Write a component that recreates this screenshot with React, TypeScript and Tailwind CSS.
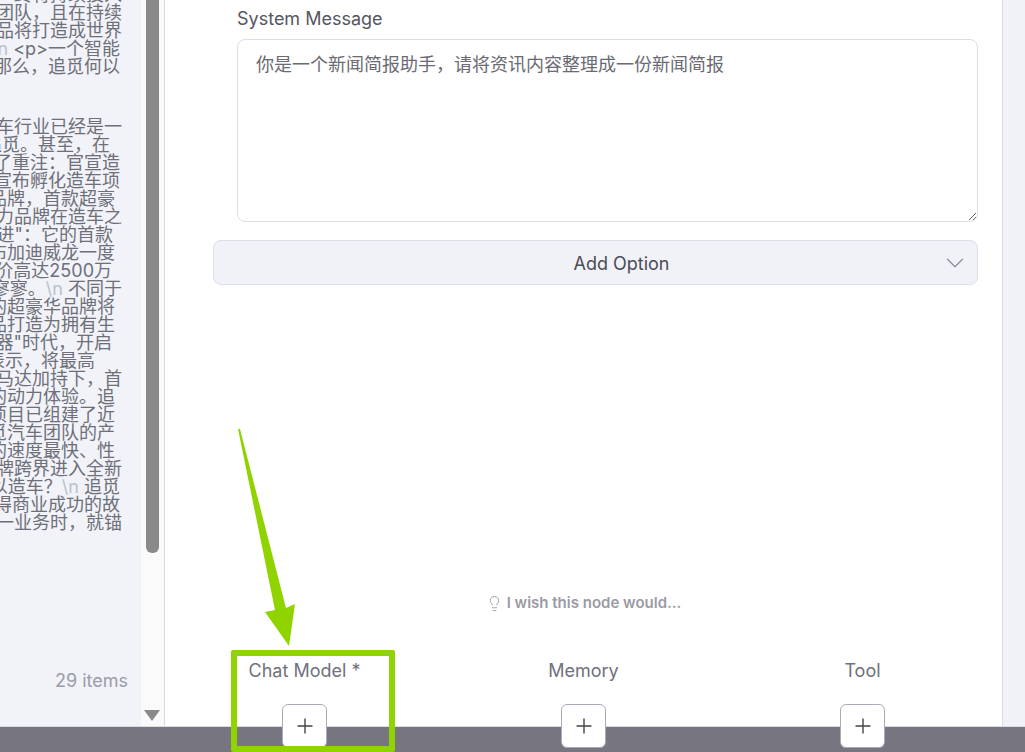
import { ChevronDown, Lightbulb, Plus } from "lucide-react";

const Esc = ({ t }: { t: string }) => <span className="text-[#b9c2cd]">{t}</span>;

const firstBlock = [
  { k: 0, pr: "pr-[19px]", c: <>终将持续投入</> },
  { k: 1, pr: "pr-[19px]", c: <>团队，且在持续</> },
  { k: 2, pr: "pr-[19px]", c: <>品将打造成世界</> },
  { k: 3, pr: "pr-[21px]", c: <><Esc t="n" /> &lt;p&gt;一个智能</> },
  { k: 4, pr: "pr-[21px]", c: <>那么，追觅何以</> },
];

const secondBlock = [
  { k: 0, pr: "pr-[19px]", c: <>车行业已经是一</> },
  { k: 1, pr: "pr-[31px]", c: <>追觅。甚至，在</> },
  { k: 2, pr: "pr-[21px]", c: <>了重注：官宣造</> },
  { k: 3, pr: "pr-[21px]", c: <>宣布孵化造车项</> },
  { k: 4, pr: "pr-[26px]", c: <>品牌，首款超豪</> },
  { k: 5, pr: "pr-[19px]", c: <>力品牌在造车之</> },
  { k: 6, pr: "pr-[28px]", c: <>进"：它的首款</> },
  { k: 7, pr: "pr-[26px]", c: <>布加迪威龙一度</> },
  { k: 8, pr: "pr-[29px]", c: <>价高达2500万</> },
  { k: 9, pr: "pr-[19px]", c: <>寥寥。<Esc t="\n" /> 不同于</> },
  { k: 10, pr: "pr-[26px]", c: <>的超豪华品牌将</> },
  { k: 11, pr: "pr-[26px]", c: <>品打造为拥有生</> },
  { k: 12, pr: "pr-[29px]", c: <>器"时代，开启</> },
  { k: 13, pr: "pr-[46px]", c: <>表示，将最高</> },
  { k: 14, pr: "pr-[19px]", c: <>马达加持下，首</> },
  { k: 15, pr: "pr-[26px]", c: <>的动力体验。追</> },
  { k: 16, pr: "pr-[26px]", c: <>项目已组建了近</> },
  { k: 17, pr: "pr-[26px]", c: <>觅汽车团队的产</> },
  { k: 18, pr: "pr-[26px]", c: <>的速度最快、性</> },
  { k: 19, pr: "pr-[19px]", c: <>牌跨界进入全新</> },
  { k: 20, pr: "pr-[21px]", c: <>以造车？<Esc t="\n" /> 追觅</> },
  { k: 21, pr: "pr-[21px]", c: <>得商业成功的故</> },
  { k: 22, pr: "pr-[19px]", c: <>一业务时，就锚</> },
];

const font = "font-['Inter','Noto_Sans_CJK_SC',sans-serif]";

function Slot({ label }: { label: string }) {
  return (
    <div className="flex flex-col items-center">
      <div className="h-[22px] text-[18px] leading-[22px] text-[#70717c]">{label}</div>
      <button className="mt-[22px] flex h-[44px] w-[45px] items-center justify-center rounded-[6px] border border-[#a9abba] bg-white text-[#444]">
        <Plus size={24} strokeWidth={1.4} />
      </button>
    </div>
  );
}

export default function App() {
  return (
    <div className={`relative flex h-[752px] w-full flex-col overflow-hidden bg-[#f1f2f8] ${font}`}>
      <div className="flex h-[726px] w-full">
        <div className="w-[141px] shrink-0 overflow-hidden bg-[#f1f3f8] text-[18px] leading-[18px] text-[#6e6f78]">
          <div className="-mt-[14px]">
            {firstBlock.map((l) => (
              <div key={l.k} className={`flex justify-end whitespace-pre ${l.pr}`}><span>{l.c}</span></div>
            ))}
          </div>
          <div className="mt-[42px]">
            {secondBlock.map((l) => (
              <div key={l.k} className={`flex justify-end whitespace-pre ${l.pr}`}><span>{l.c}</span></div>
            ))}
          </div>
          <div className="mt-[140px] pr-[13px] text-right text-[#9b9da8]">29 items</div>
        </div>

        <div className="flex w-[23px] shrink-0 flex-col items-center bg-[#fafafa] pr-[1px]">
          <div className="h-[553px] w-[13px] rounded-b-[6px] bg-[#8a8a8a]" />
          <div className="mt-[157px] h-0 w-0 border-x-[8px] border-t-[11px] border-x-transparent border-t-[#8a8a8a]" />
        </div>

        <div className="relative z-10 h-[726px] w-[839px] shrink-0 border-x border-[#d8dcea] bg-white pt-[8px]">
          <div className="ml-[72px] mr-6 mb-[9px] h-[22px] text-[18px] leading-[22px] text-[#55565f]">System Message</div>
          <textarea
            readOnly
            defaultValue="你是一个新闻简报助手，请将资讯内容整理成一份新闻简报"
            className="ml-[72px] block h-[183px] w-[741px] rounded-[8px] border border-[#dcdde6] bg-white px-[18px] py-[13px] text-[18px] leading-[24px] text-[#6a6a72] outline-none"
          />
          <div className="mt-[18px] ml-12 mr-6 flex h-[45px] items-center rounded-[8px] border border-[#dcdfe9] bg-[#f1f2f8] pr-[7px] pl-[89px]">
            <span className="flex-1 pt-[2px] text-center text-[18px] text-[#4b4c55]">Add Option</span>
            <ChevronDown size={30} strokeWidth={1} className="text-[#8e8f98]" />
          </div>
          <div className="mt-[308px] flex h-[20px] items-center justify-center gap-[4px] text-[15px] font-semibold text-[#9a9ba6]">
            <Lightbulb size={17} strokeWidth={1.3} />
            <span>I wish this node would...</span>
          </div>
          <div className="mt-[47px] grid grid-cols-3">
            <Slot label="Chat Model *" />
            <Slot label="Memory" />
            <Slot label="Tool" />
          </div>
        </div>

        <div className="flex-1 bg-[#f1f2f8]" />
      </div>

      <div className="h-[26px] border-t border-[#d9dbe4] bg-[#767580]" />

      <div className="absolute top-[650px] left-[231px] z-20 h-[102px] w-[164px] rounded-[2px] border-[6px] border-[#8fd400]" />
      <svg className="absolute top-0 left-0 z-20" width="1025" height="752" fill="none">
        <polygon points="238,429 240,429 286,608 295,604 289,646 265,612 275,610" fill="#8fd400" />
      </svg>
    </div>
  );
}
